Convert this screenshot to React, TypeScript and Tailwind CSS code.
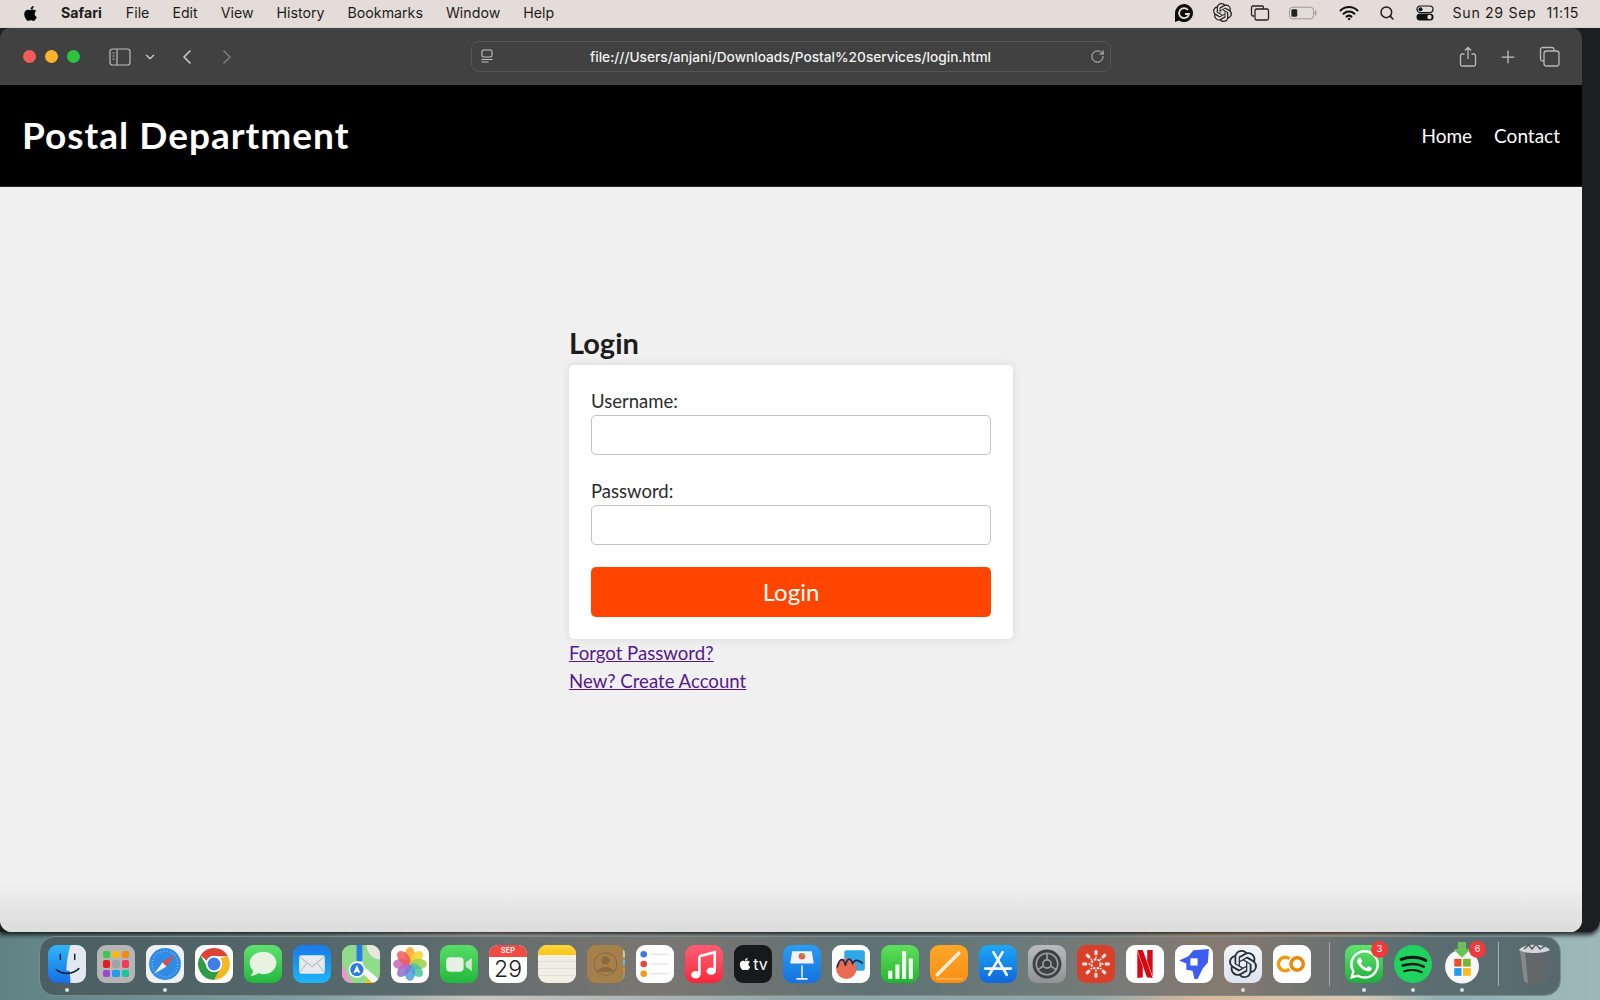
import React from 'react';
import { FaApple } from 'react-icons/fa';
import { SiNetflix, SiOpenai, SiWhatsapp } from 'react-icons/si';
import {
  ChevronDown,
  ChevronLeft,
  ChevronRight,
  Plus,
  RotateCw,
  Search,
} from 'lucide-react';

const menuItems = ['File', 'Edit', 'View', 'History', 'Bookmarks', 'Window', 'Help'];

const Squircle: React.FC<{ className: string; children?: React.ReactNode }> = ({ className, children }) => (
  <div className={`relative h-[38px] w-[38px] overflow-hidden rounded-[9px] ${className}`}>{children}</div>
);

const Svg: React.FC<{ children: React.ReactNode }> = ({ children }) => (
  <svg viewBox="0 0 37 37" className="absolute inset-0 h-full w-full">
    {children}
  </svg>
);

const Finder = () => (
  <Squircle className="bg-gradient-to-b from-[#34b4f8] to-[#1a6ee6]">
    <Svg>
      <path d="M22 0 C19 10 18 18 18 25 L21 25 L22 37 L37 37 L37 0Z" fill="#e4e8f0" />
      <path d="M12 9v5M26 9v5" stroke="#1b2a44" strokeWidth="1.5" strokeLinecap="round" />
      <path d="M8 24c6 5 16 5 22-1" stroke="#12233e" strokeWidth="1.5" fill="none" strokeLinecap="round" />
    </Svg>
  </Squircle>
);

const Launchpad = () => {
  const cells = ['#3ec94a', '#f5b61a', '#f08a12', '#e01f1f', '#a0a4a8', '#f23a5e', '#a044d8', '#1f9cf0', '#18c49a'];
  return (
    <Squircle className="bg-[#b5b5b5]">
      <div className="grid h-full grid-cols-3 gap-[2px] px-[6px] py-[6px]">
        {cells.map(c => (
          <span key={c} className="rounded-[2px]" style={{ backgroundColor: c }} />
        ))}
      </div>
    </Squircle>
  );
};

const Safari = () => (
  <Squircle className="bg-[#eef0f2]">
    <Svg>
      <circle cx="18.5" cy="18.5" r="15.5" fill="#2f8be6" />
      <circle cx="18.5" cy="18.5" r="12.5" fill="none" stroke="#7db8f0" strokeWidth="1.5" strokeDasharray="1 2" />
      <path d="M28 9 L16 17 L20 21Z" fill="#f0453a" />
      <path d="M8 28 L16 17 L20 21Z" fill="#f4f4f4" />
    </Svg>
  </Squircle>
);

const Chrome = () => (
  <Squircle className="bg-white">
    <Svg>
      <path d="M18.5 3 A15.5 15.5 0 0 1 32 11 L18.5 11 A7.5 7.5 0 0 0 11.6 15.5 L5.5 10 A15.5 15.5 0 0 1 18.5 3Z" fill="#dc4437" />
      <path d="M32 11 A15.5 15.5 0 0 1 18.5 34 L25 22 A7.5 7.5 0 0 0 24.5 13Z" fill="#f5b81c" />
      <path d="M5.5 10 A15.5 15.5 0 0 0 18.5 34 L24 24 A7.5 7.5 0 0 1 11.6 21Z" fill="#2f9b48" />
      <circle cx="18.5" cy="18.5" r="8" fill="#fff" />
      <circle cx="18.5" cy="18.5" r="6.3" fill="#3f7ee8" />
    </Svg>
  </Squircle>
);

const Messages = () => (
  <Squircle className="bg-gradient-to-b from-[#5fe06e] to-[#1fb93c]">
    <Svg>
      <ellipse cx="18.5" cy="17.5" rx="13" ry="11" fill="#e6f2e2" />
      <path d="M9 23 C9 27 8 29 6 30 C10 30 13 28 15 27Z" fill="#e6f2e2" />
    </Svg>
  </Squircle>
);

const Mail = () => (
  <Squircle className="bg-gradient-to-b from-[#1a78e8] to-[#1fb5f8]">
    <Svg>
      <rect x="6" y="10" width="25" height="18" rx="2" fill="#e8ebee" />
      <path d="M6 11 L18.5 21 L31 11M6 27 L14 17M31 27 L23 17" stroke="#b4bac2" strokeWidth="1" fill="none" />
    </Svg>
  </Squircle>
);

const Maps = () => (
  <Squircle className="bg-[#8fdc8a]">
    <Svg>
      <path d="M0 18 L10 37 L0 37Z" fill="#e79ac8" />
      <path d="M22 37 L28 28 L37 37Z" fill="#f4c21e" />
      <path d="M24 0 H37 V14 C30 14 24 8 24 0Z" fill="#e6e6dc" />
      <path d="M14 0 H20 V20 L37 34 V37 H30 L14 22Z" fill="#f6f6f6" />
      <rect x="14" y="0" width="6" height="16" fill="#2b7be4" />
      <circle cx="14.5" cy="24" r="8" fill="#fff" />
      <circle cx="14.5" cy="24" r="6.5" fill="#2b7be4" />
      <path d="M14.5 19.5 L18 27.5 L14.5 26 L11 27.5Z" fill="#fff" />
    </Svg>
  </Squircle>
);

const Photos = () => {
  const petals = ['#f6a623', '#f5d327', '#9bd14a', '#4fc2a0', '#4aa0e0', '#8a70d0', '#c866b8', '#ef5b5b'];
  return (
    <Squircle className="bg-white">
      <Svg>
        {petals.map((c, i) => (
          <ellipse key={c} cx="18.5" cy="10" rx="5" ry="8" fill={c} opacity="0.85" transform={`rotate(${i * 45} 18.5 18.5)`} />
        ))}
      </Svg>
    </Squircle>
  );
};

const FaceTime = () => (
  <Squircle className="bg-gradient-to-b from-[#55dd66] to-[#1fb83a]">
    <Svg>
      <rect x="6" y="12" width="17" height="14" rx="3.5" fill="#e6f0e3" />
      <path d="M25 17 L31 12.5 V25.5 L25 21Z" fill="#cfe8cb" />
    </Svg>
  </Squircle>
);

const Calendar = () => (
  <Squircle className="bg-white">
    <div className="flex h-[12px] items-center justify-center bg-[#f04a45] font-['Inter',sans-serif] text-[7.5px] font-semibold text-white">SEP</div>
    <div className="text-center font-['Inter',sans-serif] text-[23px] leading-[25px] font-light text-[#222]">29</div>
  </Squircle>
);

const Notes = () => (
  <Squircle className="bg-[#f1eee6]">
    <div className="h-[10px] bg-gradient-to-b from-[#ffd83a] to-[#f9c411]" />
    <div className="mt-[6px] h-px bg-[#dfdcd2]" />
    <div className="mt-[6px] h-px bg-[#dfdcd2]" />
    <div className="mt-[6px] h-px bg-[#dfdcd2]" />
  </Squircle>
);

const Contacts = () => (
  <Squircle className="bg-[#a5804a]">
    <Svg>
      <circle cx="18" cy="18.5" r="11" fill="none" stroke="#8a6a3e" strokeWidth="1" />
      <circle cx="18" cy="15" r="4" fill="#8a6a3e" />
      <path d="M10 26c2-6 14-6 16 0" fill="#8a6a3e" />
      <rect x="35" y="5" width="2" height="7" fill="#d6c7a8" />
      <rect x="35" y="14" width="2" height="6" fill="#6cb8d8" />
      <rect x="35" y="22" width="2" height="5" fill="#e08a2c" />
      <rect x="35" y="29" width="2" height="4" fill="#6cc070" />
    </Svg>
  </Squircle>
);

const Reminders = () => (
  <Squircle className="bg-white">
    <Svg>
      {[
        [9, '#3a7be8'],
        [18.5, '#e8453c'],
        [28, '#f09a1e'],
      ].map(([y, c]) => (
        <g key={String(c)}>
          <circle cx="7.5" cy={Number(y)} r="3.2" fill={String(c)} />
          <path d={`M14 ${y}H32`} stroke="#d4d4d8" strokeWidth="0.8" />
        </g>
      ))}
    </Svg>
  </Squircle>
);

const Music = () => (
  <Squircle className="bg-gradient-to-b from-[#fb5c74] to-[#fa233b]">
    <Svg>
      <path d="M14 11 L29 7 V25" stroke="#fff" strokeWidth="2.5" fill="none" />
      <path d="M14 11 V29" stroke="#fff" strokeWidth="2.5" />
      <ellipse cx="10.5" cy="29" rx="4.5" ry="3.6" fill="#fff" />
      <ellipse cx="25.5" cy="25.5" rx="4.5" ry="3.6" fill="#fff" />
    </Svg>
  </Squircle>
);

const AppleTv = () => (
  <Squircle className="flex items-center justify-center gap-[1px] bg-[#161a1b]">
    <FaApple className="h-[14px] w-[14px] text-white" />
    <span className="font-['Inter',sans-serif] text-[16px] leading-none text-white">tv</span>
  </Squircle>
);

const Keynote = () => (
  <Squircle className="bg-gradient-to-b from-[#2a9cf4] to-[#1672e0]">
    <Svg>
      <path d="M18.5 20 V32 M13 33 H24" stroke="#eef2f6" strokeWidth="1.5" />
      <path d="M9 6 H28 L30 18 H7Z" fill="#f1f3f5" />
      <circle cx="18.5" cy="11" r="3.2" fill="#e85c4a" />
      <path d="M18.5 8 A3.2 3.2 0 0 1 21.7 11 H18.5Z" fill="#6cc04a" />
    </Svg>
  </Squircle>
);

const Freeform = () => (
  <Squircle className="bg-white">
    <Svg>
      <rect x="12" y="5" width="20" height="20" rx="2" fill="#2ea9e6" />
      <circle cx="14" cy="23" r="10" fill="#ec6a50" />
      <path d="M5 22 C8 10 12 14 13 20 C15 12 18 12 20 18 C22 14 25 14 30 18" stroke="#15325c" strokeWidth="1.6" fill="none" />
    </Svg>
  </Squircle>
);

const Numbers = () => (
  <Squircle className="bg-gradient-to-b from-[#5ee05c] to-[#1fb52e]">
    <Svg>
      <rect x="7" y="25" width="4" height="8" fill="#f2f7ef" />
      <rect x="14" y="19" width="4" height="14" fill="#f2f7ef" />
      <rect x="20.5" y="6" width="4" height="27" fill="#f2f7ef" />
      <rect x="27" y="13" width="4" height="20" fill="#f2f7ef" />
    </Svg>
  </Squircle>
);

const Pages = () => (
  <Squircle className="bg-gradient-to-b from-[#fba629] to-[#f98f14]">
    <Svg>
      <path d="M7 29 L28 8" stroke="#fbeed8" strokeWidth="3.4" strokeLinecap="round" />
      <path d="M6 33 H32" stroke="#fbd79a" strokeWidth="0.8" />
    </Svg>
  </Squircle>
);

const AppStore = () => (
  <Squircle className="bg-gradient-to-b from-[#20a6f4] to-[#1366dc]">
    <Svg>
      <path d="M14 7 L27 29 M23 7 L10 29 M6 23 H31" stroke="#f2f6fa" strokeWidth="2.6" strokeLinecap="round" />
    </Svg>
  </Squircle>
);

const Settings = () => (
  <Squircle className="bg-gradient-to-b from-[#b8bcbf] to-[#8f9396]">
    <Svg>
      <circle cx="18.5" cy="18.5" r="14" fill="#3d3f42" />
      <circle cx="18.5" cy="18.5" r="10.5" fill="none" stroke="#9a9da0" strokeWidth="1.6" />
      <circle cx="18.5" cy="18.5" r="4" fill="none" stroke="#9a9da0" strokeWidth="1.6" />
      <path d="M18.5 14.5 V8 M15 20.5 L9.5 24 M22 20.5 L27.5 24" stroke="#9a9da0" strokeWidth="1.6" />
    </Svg>
  </Squircle>
);

const Canvas = () => {
  const angles = [0, 45, 90, 135, 180, 225, 270, 315];
  return (
    <Squircle className="bg-[#d8402a]">
      <Svg>
        <circle cx="18.5" cy="18.5" r="4.5" fill="none" stroke="#f6e4df" strokeWidth="2" strokeDasharray="2.5 1.2" />
        {angles.map(a => (
          <g key={a} transform={`rotate(${a} 18.5 18.5)`}>
            <rect x="17" y="5" width="3" height="5" rx="1" fill="#f6e4df" />
            <circle cx="18.5" cy="12" r="0.9" fill="#f6e4df" />
          </g>
        ))}
      </Svg>
    </Squircle>
  );
};

const Netflix = () => (
  <Squircle className="flex items-center justify-center bg-white">
    <SiNetflix className="h-[28px] w-[28px] text-[#d40a14]" />
  </Squircle>
);

const TaskApp = () => (
  <Squircle className="bg-white">
    <Svg>
      <path d="M4 15 L13 11 L18 5 L33 4 L32 17 L27 23 L22 33 L19 33 L17 25 L11 24 L11 18Z" fill="#3d5cf0" />
      <rect x="15" y="13" width="7" height="7" fill="#fff" />
    </Svg>
  </Squircle>
);

const ChatGpt = () => (
  <Squircle className="flex items-center justify-center bg-gradient-to-b from-[#f3f5f8] to-[#dde4ee]">
    <SiOpenai className="h-[28px] w-[28px] text-[#26303c]" />
  </Squircle>
);

const Colab = () => (
  <Squircle className="bg-white">
    <Svg>
      <path d="M16 13.5 A6.5 6.5 0 1 0 16 23.5" fill="none" stroke="#f29a0c" strokeWidth="3.4" />
      <circle cx="23.5" cy="18.5" r="6" fill="none" stroke="#e8890c" strokeWidth="3.4" />
    </Svg>
  </Squircle>
);

const Badge: React.FC<{ n: number }> = ({ n }) => (
  <span className="absolute top-[-4px] right-[-5px] flex h-[17px] w-[17px] items-center justify-center rounded-full bg-[#ee3a3a] font-['Inter',sans-serif] text-[9.5px] text-white">
    {n}
  </span>
);

const WhatsApp = () => (
  <div className="relative h-[38px] w-[38px]">
    <Squircle className="flex items-center justify-center bg-gradient-to-b from-[#5fe46e] to-[#1fae3e]">
      <SiWhatsapp className="h-[29px] w-[29px] text-white" />
    </Squircle>
    <Badge n={3} />
  </div>
);

const Spotify = () => (
  <div className="relative h-[38px] w-[38px] rounded-full bg-[#1ed35e]">
    <Svg>
      <path d="M7 14 C14 11 24 11 31 15" stroke="#10151a" strokeWidth="3" fill="none" strokeLinecap="round" />
      <path d="M8.5 20 C15 18 23 18 29 21" stroke="#10151a" strokeWidth="2.5" fill="none" strokeLinecap="round" />
      <path d="M10 25.5 C15 24 22 24 27 26.5" stroke="#10151a" strokeWidth="2" fill="none" strokeLinecap="round" />
    </Svg>
  </div>
);

const MsStore = () => (
  <div className="relative h-[38px] w-[38px]">
    <svg viewBox="0 0 37 37" className="absolute inset-0 h-full w-full overflow-visible">
      <circle cx="18.5" cy="21" r="16.5" fill="#f7f7f7" />
      <rect x="11" y="13.5" width="7" height="7.5" fill="#ea4f2a" />
      <rect x="19.5" y="13.5" width="7.5" height="7.5" fill="#7bb52a" />
      <rect x="11" y="22.5" width="7" height="7.5" fill="#1f9ce8" />
      <rect x="19.5" y="22.5" width="7.5" height="7.5" fill="#fcba1c" />
      <path d="M14.5 -3 H22.5 V4 H27 L18.5 12.5 L10 4 H14.5Z" fill="#6cc05c" />
    </svg>
    <Badge n={6} />
  </div>
);

const Trash = () => (
  <div className="relative h-[40px] w-[37px]">
    <svg viewBox="0 0 37 44" className="absolute inset-x-0 top-[-3px] h-[44px] w-[37px]">
      <path d="M4 10 L8 40 C12 44 25 44 29 40 L33 10Z" fill="#62676a" />
      <path d="M4 10 L8 40 C9 41 10 41.5 12 42 L9 10Z" fill="#85898c" />
      <path d="M3 9 C8 2 28 2 34 9 C28 13 9 13 3 9Z" fill="#d4d6d8" />
      <path d="M8 8 L13 4 L16 8 L20 3 L24 8 L29 5" stroke="#55585c" strokeWidth="1.4" fill="none" />
    </svg>
  </div>
);

// [icon, running dot]
const dockMain: [React.FC, boolean][] = [
  [Finder, true],
  [Launchpad, false],
  [Safari, true],
  [Chrome, false],
  [Messages, false],
  [Mail, false],
  [Maps, false],
  [Photos, false],
  [FaceTime, false],
  [Calendar, false],
  [Notes, false],
  [Contacts, false],
  [Reminders, false],
  [Music, false],
  [AppleTv, false],
  [Keynote, false],
  [Freeform, false],
  [Numbers, false],
  [Pages, false],
  [AppStore, false],
  [Settings, false],
  [Canvas, false],
  [Netflix, false],
  [TaskApp, false],
  [ChatGpt, true],
  [Colab, false],
];
const dockRecent: [React.FC, boolean][] = [
  [WhatsApp, true],
  [Spotify, true],
  [MsStore, true],
];

const DockItem: React.FC<{ Icon: React.FC; dot: boolean }> = ({ Icon, dot }) => (
  <div className="relative">
    <Icon />
    {dot && <span className="absolute bottom-[-9px] left-[17px] h-[4px] w-[4px] rounded-full bg-[#d8dfe0]" />}
  </div>
);

const Field: React.FC<{ label: string; type: string }> = ({ label, type }) => (
  <div className="mb-[22px]">
    <label className="block pt-[1px] text-[18.5px] leading-[26px] text-[#2c2c2c]">{label}</label>
    <input type={type} className="mt-[1px] block h-[40px] w-full rounded-[5px] border border-[#c4c4c4] bg-white" />
  </div>
);

export default function App() {
  return (
    <div className="flex h-[1000px] w-[1600px] flex-col overflow-hidden bg-[linear-gradient(90deg,#5f8285_0%,#7fa0a2_20%,#c9c4be_30%,#8fa5a8_50%,#8fa5a8_68%,#d8b89a_75%,#d8c8b5_85%,#8fb0b3_90%,#9db8ba_100%)] font-['Lato',sans-serif]">
      {/* Menu bar */}
      <div className="flex h-[28px] shrink-0 items-center bg-[#e4dcd8] pr-[21px] pb-[2px] pl-[22px] font-['Inter',sans-serif] text-[14.2px] text-[#1c1c1c]">
        <FaApple className="h-[17px] w-[17px] text-black" />
        <span className="ml-[22px] font-bold">Safari</span>
        <div className="ml-[24px] flex gap-[23px]">
          {menuItems.map(m => (
            <span key={m}>{m}</span>
          ))}
        </div>
        <div className="ml-auto flex items-center">
          <svg viewBox="0 0 20 20" className="h-[20px] w-[20px]">
            <path d="M10 1a9 9 0 1 1-5 16.5L1 19V10a9 9 0 0 1 9-9Z" fill="#0c0c0c" />
            <path d="M14 7a5 5 0 1 0 1 4h-4" stroke="#e4dcd8" strokeWidth="1.8" fill="none" />
          </svg>
          <SiOpenai className="ml-[19px] h-[19px] w-[19px] text-[#222]" />
          <svg viewBox="0 0 20 20" className="ml-[18px] h-[20px] w-[20px]" fill="none" stroke="#222" strokeWidth="1.3">
            <path d="M4 13H3a1.5 1.5 0 0 1-1.5-1.5v-7A1.5 1.5 0 0 1 3 3h9a1.5 1.5 0 0 1 1.5 1.5V6" />
            <rect x="5" y="6" width="13.5" height="11" rx="1.5" />
          </svg>
          <svg viewBox="0 0 30 14" className="ml-[19px] h-[14px] w-[29px]">
            <rect x="0.5" y="1" width="25" height="12" rx="3.5" fill="none" stroke="#9a9594" />
            <rect x="2.5" y="3" width="6" height="8" rx="1.5" fill="#222" />
            <path d="M27.5 5v4" stroke="#9a9594" strokeWidth="1.4" strokeLinecap="round" />
          </svg>
          <svg viewBox="0 0 20 16" className="ml-[21px] h-[16px] w-[20px]" fill="none" stroke="#111" strokeLinecap="round">
            <path d="M1.5 5.5a12 12 0 0 1 17 0" strokeWidth="2" />
            <path d="M4.5 8.7a8 8 0 0 1 11 0" strokeWidth="2" />
            <path d="M7.5 11.6a4 4 0 0 1 5 0" strokeWidth="2" />
            <circle cx="10" cy="14" r="0.8" fill="#111" />
          </svg>
          <Search className="ml-[20px] h-[16px] w-[16px] text-[#1c1c1c]" strokeWidth={2.2} />
          <svg viewBox="0 0 18 16" className="ml-[21px] h-[16px] w-[18px]">
            <rect x="1" y="1" width="16" height="6.5" rx="3.2" fill="none" stroke="#111" strokeWidth="1.2" />
            <circle cx="4.5" cy="4.2" r="2" fill="#111" />
            <rect x="0.5" y="8.5" width="17" height="7" rx="3.5" fill="#111" />
            <circle cx="13.5" cy="12" r="2.2" fill="#e4dcd8" />
          </svg>
          <span className="ml-[19px] tracking-[0.65px]">Sun 29 Sep</span>
          <span className="ml-[10px] tracking-[0.5px]">11:15</span>
        </div>
      </div>

      {/* Desktop row: Safari window and the dark window behind it */}
      <div className="flex h-[904px] shrink-0 rounded-br-[12px] bg-[#1d1e1f] shadow-[0_3px_4px_rgba(0,0,0,0.75)]">
        <div className="flex h-full w-[1582px] shrink-0 flex-col overflow-hidden rounded-t-[10px] rounded-b-[12px]">
          {/* Toolbar */}
          <div className="flex h-[57px] shrink-0 items-center bg-[#414141] pl-[23px] text-[#c9c9c9]">
            <span className="h-[13px] w-[13px] rounded-full bg-[#f25c58]" />
            <span className="ml-[9px] h-[13px] w-[13px] rounded-full bg-[#f9b32f]" />
            <span className="ml-[9px] h-[13px] w-[13px] rounded-full bg-[#2ac33f]" />
            <svg viewBox="0 0 22 18" className="ml-[29px] h-[18px] w-[22px]" fill="none" stroke="#bdbdbd" strokeWidth="1.2">
              <rect x="1" y="1" width="20" height="16" rx="2.5" />
              <path d="M8 1v16M3.5 5h2M3.5 8h2M3.5 11h2" />
            </svg>
            <ChevronDown className="ml-[12px] h-[14px] w-[14px]" strokeWidth={2.4} />
            <ChevronLeft className="ml-[18px] h-[24px] w-[24px]" strokeWidth={1.6} />
            <ChevronRight className="ml-[16px] h-[24px] w-[24px] text-[#7b7b7b]" strokeWidth={1.6} />
            <div className="ml-[232px] flex h-[31px] w-[640px] items-center rounded-[8px] border border-[#555] pr-[5px] pl-[8px] text-white">
              <svg viewBox="0 0 14 16" className="h-[16px] w-[14px]" fill="none" stroke="#c4c4c4" strokeWidth="1.1">
                <rect x="2" y="1" width="10" height="7" rx="1.5" />
                <path d="M1.5 10.5h11M1.5 13h7" />
              </svg>
              <span className="flex-1 pt-[2px] pr-[3px] text-center font-['Inter',sans-serif] text-[13.7px] font-medium text-[#f2f2f2]">file:///Users/anjani/Downloads/Postal%20services/login.html</span>
              <RotateCw className="h-[15px] w-[15px] text-[#c9c9c9]" strokeWidth={1.6} />
            </div>
            <svg viewBox="0 0 18 22" className="ml-[348px] h-[22px] w-[18px]" fill="none" stroke="#b8b8b8" strokeWidth="1.3">
              <path d="M5.5 8H3a1.5 1.5 0 0 0-1.5 1.5v9A1.5 1.5 0 0 0 3 20h12a1.5 1.5 0 0 0 1.5-1.5v-9A1.5 1.5 0 0 0 15 8h-2.5M9 13V1.5M5.8 4.5 9 1.5l3.2 3" />
            </svg>
            <Plus className="ml-[21px] h-[20px] w-[20px] text-[#c4c4c4]" strokeWidth={1.5} />
            <svg viewBox="0 0 21 21" className="ml-[21px] h-[21px] w-[21px]" fill="none" stroke="#b8b8b8" strokeWidth="1.3">
              <path d="M5 15H3.5A2 2 0 0 1 1.5 13V3.5a2 2 0 0 1 2-2H13a2 2 0 0 1 2 2V5" />
              <rect x="5" y="5" width="15" height="15" rx="2.5" />
            </svg>
          </div>

          {/* Site header */}
          <header className="flex h-[102px] shrink-0 items-center justify-between border-b border-[#2a2a2a] bg-black px-[22px] text-white">
            <h1 className="pb-[2px] text-[37px] font-bold tracking-[1px]">Postal Department</h1>
            <nav className="flex gap-[22px] pt-[2px] text-[19px]">
              <a>Home</a>
              <a>Contact</a>
            </nav>
          </header>

          {/* Page */}
          <main className="relative flex-1 bg-[#f0f0f0] pt-[138px]">
            <div className="mx-auto w-[444px]">
              <h2 className="mb-[4px] text-[29px] leading-[36px] font-bold text-[#1c1c1c]">Login</h2>
              <div className="rounded-[5px] bg-white p-[22px] shadow-[0_0_10px_rgba(0,0,0,0.1)]">
                <Field label="Username:" type="text" />
                <Field label="Password:" type="password" />
                <button className="block h-[50px] w-full rounded-[5px] bg-[#ff4500] text-[24px] text-white">Login</button>
              </div>
              <div className="flex flex-col text-[18.6px] leading-[28px] text-[#551a8b] underline">
                <a>Forgot Password?</a>
                <a>New? Create Account</a>
              </div>
            </div>
            <div className="absolute inset-x-0 bottom-0 h-[50px] bg-gradient-to-b from-transparent to-[#dcdcdc]" />
          </main>
        </div>
        <div className="flex-1" />
      </div>

      {/* Dock */}
      <div className="mt-[4px] ml-[39px] flex h-[60px] w-[1522px] shrink-0 items-center rounded-[16px] border border-[#7e8a8a] bg-[linear-gradient(90deg,#4a5f62_0%,#5a6a6c_25%,#7a7672_40%,#5f7274_55%,#6d7a7a_65%,#857a70_78%,#5f6f72_88%,#566a6e_100%)] pb-[4px] pl-[8px]">
        <div className="flex gap-[11px]">
          {dockMain.map(([Icon, dot], i) => (
            <DockItem key={i} Icon={Icon} dot={dot} />
          ))}
        </div>
        <span className="mr-[15px] ml-[18px] h-[44px] w-px bg-[#a8a8a4]" />
        <div className="flex gap-[11px]">
          {dockRecent.map(([Icon, dot], i) => (
            <DockItem key={i} Icon={Icon} dot={dot} />
          ))}
        </div>
        <span className="mr-[17px] ml-[17px] h-[44px] w-px bg-[#a8b0b0]" />
        <Trash />
      </div>
    </div>
  );
}
